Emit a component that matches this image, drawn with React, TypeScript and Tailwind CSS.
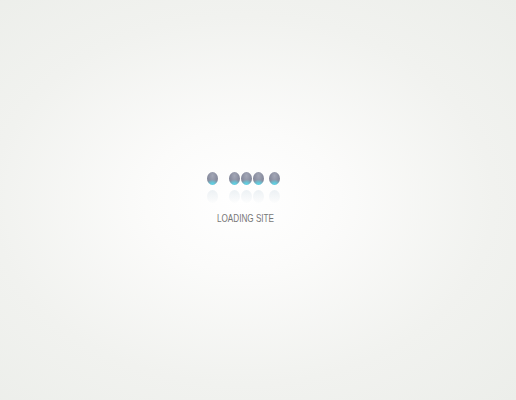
import React from "react";

function Ball({ className = "" }: { className?: string }) {
  return (
    <div className={`flex flex-col items-center ${className}`}>
      <div
        className="h-[13px] w-[11px] rounded-[50%]"
        style={{
          background:
            "radial-gradient(ellipse 60% 35% at 50% 92%, #5ad8ea 0%, rgba(90,216,234,0.6) 45%, rgba(140,145,165,0) 100%), radial-gradient(ellipse at 50% 30%, #a3a7b6 0%, #8a8ea0 55%, #7d8193 100%)",
        }}
      />
      <div
        className="mt-[5px] h-[13px] w-[11px] rounded-[50%] opacity-50"
        style={{
          background:
            "linear-gradient(to bottom, rgba(215,225,232,0.9), rgba(240,243,245,0.3))",
        }}
      />
    </div>
  );
}

export default function App() {
  return (
    <div className="h-[400px] w-[516px] bg-[radial-gradient(ellipse_at_47%_50%,#ffffff_0%,#fbfbfa_25%,#f1f2ef_65%,#eceeea_100%)]">
      <div className="flex flex-col items-start pl-[207px] pt-[172px]">
        <div className="flex">
          <Ball />
          <Ball className="ml-[10.5px]" />
          <Ball className="ml-[1.5px]" />
          <Ball className="ml-[1px]" />
          <Ball className="ml-[4.5px]" />
        </div>
        <div
          className="ml-[10px] mt-[10px] origin-left scale-x-[0.74] whitespace-nowrap text-[11px] leading-[11px] text-[#777777]"
          style={{ fontFamily: '"Liberation Sans", Arial, sans-serif' }}
        >
          LOADING SITE
        </div>
      </div>
    </div>
  );
}
